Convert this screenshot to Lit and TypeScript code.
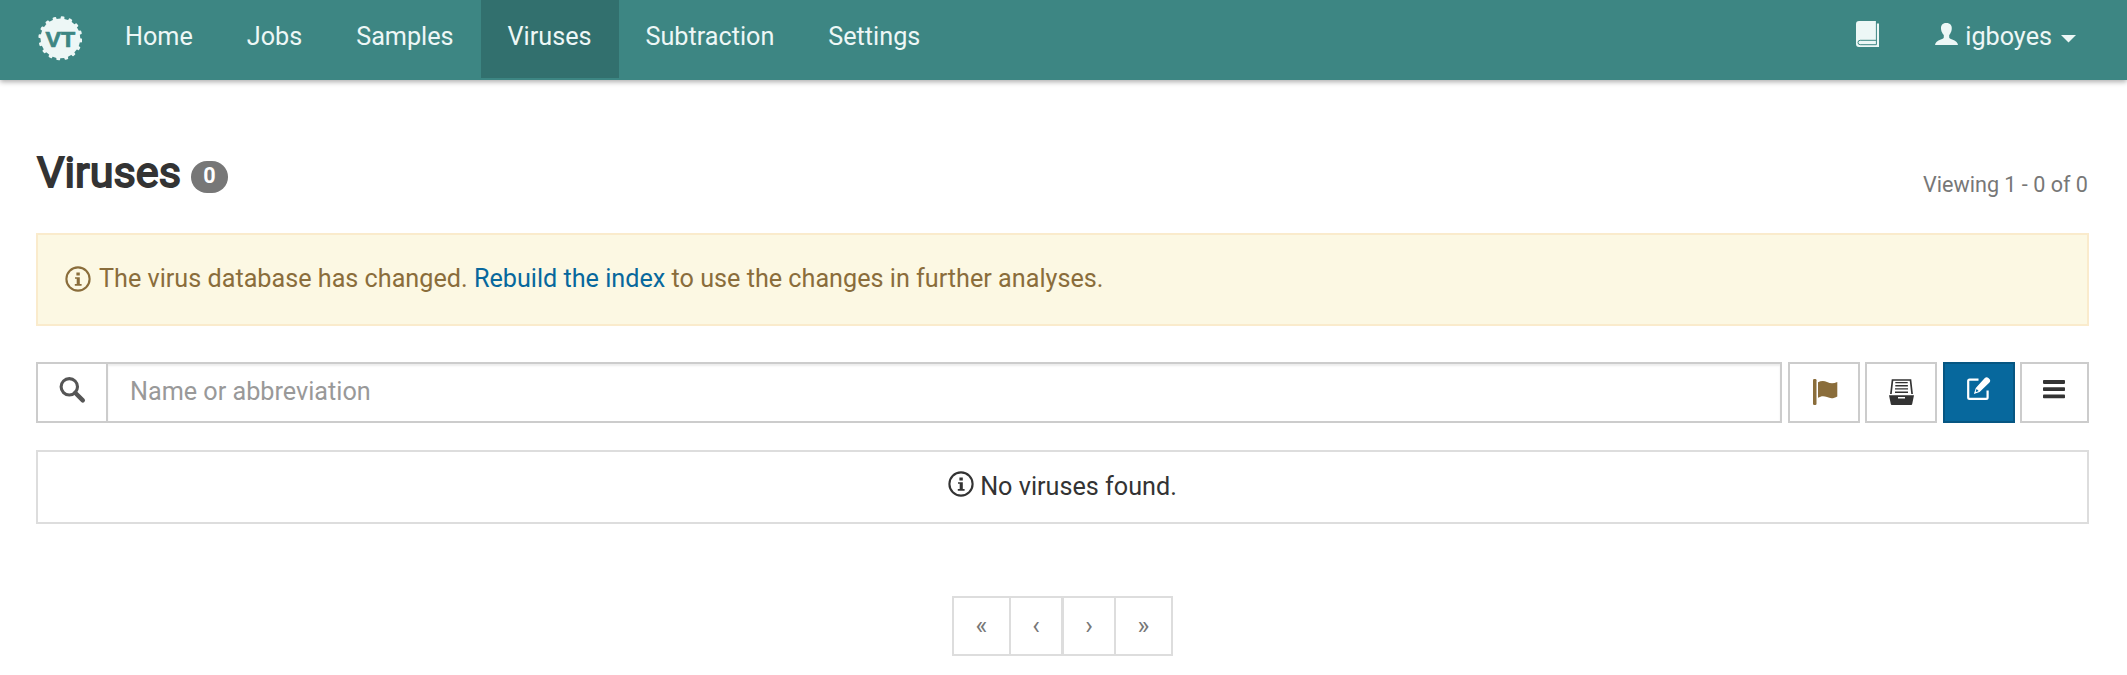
import { LitElement, html, svg, css } from "lit";
import { customElement } from "lit/decorators.js";

const TEETH = Array.from({ length: 16 }, (_, i) => i * 22.5 + 6);

const infoIcon = html`<svg class="info" width="26" height="26" viewBox="0 0 26 26" fill="none">
  <circle cx="13" cy="13" r="11.6" stroke="currentColor" stroke-width="2.1"/>
  <path fill="currentColor" d="M11.400 6.500h3.400v2.900h-3.400zM10 11.200h4.800v6.900h1.800v1.600H9.800v-1.600h1.900V12.800H10z"/>
</svg>`;

const flagIcon = html`<svg width="25" height="26" viewBox="0 0 25 26" fill="currentColor">
  <rect width="3.500" height="26" rx="1.200"/>
  <path d="M5 3.300C8 1.600 11 1.500 14 3c3.500 1.700 6.500 1.700 10.300 0v14.500c-3.800 2.200-6.800 2.200-10.300.6-3-1.400-6-1.300-9 .7z"/>
</svg>`;

const archiveIcon = html`<svg width="25" height="26" viewBox="0 0 25 26" fill="currentColor">
  <path d="M1.900 15L3.500 1h18l1.600 14" fill="none" stroke="currentColor" stroke-width="1.700"/>
  <path d="M6.300 3.100h12.400v1.200H6.300zM6.300 6.100h12.600v1.300H6.300zM6 9.200h13v1.400H6zM6 12.400h13v1.600H6z"/>
  <path fill-rule="evenodd" d="M0 16.200h25L23.200 25q-.2.9-1 .9H2.800q-.8 0-1-.9zM9 18v1.600h7V18z"/>
</svg>`;

const editIcon = html`<svg width="24" height="24" viewBox="0 0 24 24" fill="currentColor">
  <path d="M11.500 2.600H2.600q-1.400 0-1.400 1.400v16.400q0 1.400 1.400 1.400h16.600q1.400 0 1.400-1.400V13.500" fill="none" stroke="currentColor" stroke-width="2.200"/>
  <path d="M17.600 1.300q2-2 3.800-.2l1 1q1.700 1.800-.2 3.700L12.600 15l-5.700 1.900 1.900-6z"/>
  <path d="M9.600 12.100l2 2-2.300.800-.6-.7z" fill="#07689d"/>
</svg>`;

const menuIcon = html`<svg width="22" height="19" viewBox="0 0 22 19" fill="currentColor">
  <rect width="22" height="3.900" rx=".8"/><rect y="7.200" width="22" height="3.900" rx=".8"/><rect y="14.400" width="22" height="3.900" rx=".8"/>
</svg>`;

@customElement("app-root")
export class AppRoot extends LitElement {
  static styles = css`
    :host { display: block; height: 675px; background: #fff; color: #333; font: 25.2px/36px Roboto, sans-serif; overflow: hidden; }
    * { box-sizing: border-box; }
    svg { display: block; flex: none; }
    .navbar { display: flex; height: 80px; padding: 0 25px 2px 38px; background: #3d8683; color: #edf7f6; box-shadow: 0 2px 5px rgba(0,0,0,.32); }
    .logo { margin: 16px 16px 0 0; }
    .logo-text { font: bold 22px "Liberation Sans", sans-serif; fill: #3d8683; stroke: #3d8683; stroke-width: .7px; }
    .nav { display: flex; }
    .nav-link { padding: 19px 27px 0; height: 78px; }
    .nav-link.active { background: #32706e; }
    .right { margin-left: auto; display: flex; align-items: flex-start; }
    .book { margin: 21px 56px 0 0; }
    .user { display: flex; padding: 19px 26px 0 0; }
    .person { margin: 4px 7px 0 0; }
    .caret { margin: 16px 0 0 9px; }
    .container { padding: 0 38px 0 36px; }
    .header { display: flex; height: 153px; padding-top: 68px; }
    .title { margin: 0 0 0 1px; font-size: 43.2px; line-height: 50px; font-weight: 400; -webkit-text-stroke: 1.8px #333; }
    .badge { width: 37px; height: 32px; border-radius: 16px; background: #777; color: #fff; font-size: 21.6px; font-weight: 700; line-height: 30px; text-align: center; margin: 13px 0 0 10px; }
    .viewing { margin: 19px 1px 0 auto; font-size: 21.6px; color: #777; }
    .alert { display: flex; height: 93px; padding: 26px 27px 0; border: 2px solid #faebcc; background: #fcf8e3; color: #8a6d3b; white-space: pre; }
    .alert .info { margin: 5px 8px 0 0; }
    .link { color: #07689d; }
    .toolbar { display: flex; height: 61px; margin-top: 36px; }
    .addon { width: 70px; border: 2px solid #ccc; border-right: 0; padding: 13px 0 0 21px; color: #555; }
    .field { flex: 1; border: 2px solid #ccc; padding: 10px 22px; color: #999; box-shadow: inset 0 2px 2px rgba(0,0,0,.075); margin-right: 6px; }
    .btn { width: 72px; border: 2px solid #ccc; display: flex; justify-content: center; margin-right: 5px; padding-top: 15px; }
    .btn.flag { color: #8a6d3b; padding-left: 2px; }
    .btn.archive { margin-right: 6px; }
    .btn.primary { background: #07689d; border-color: #065682; color: #fff; padding-top: 13px; }
    .btn.menu { width: 69px; margin-right: 0; padding: 16px 1px 0 0; }
    .empty { display: flex; justify-content: center; height: 74px; margin-top: 27px; border: 2px solid #ddd; padding-top: 17px; }
    .empty .info { margin: 2px 6px 0 0; }
    .pager { display: grid; grid-template-columns: 55px 52px 53px 57px; width: 221px; height: 60px; margin: 72px auto 0; border: 2px solid #ddd; color: #777; }
    .page { text-align: center; padding-top: 10px; }
    .page + .page { border-left: 2px solid #ddd; }
    .page:nth-child(3) { border-left-width: 3px; }
  `;

  render() {
    return html`
      <nav class="navbar">
        <svg class="logo" width="44" height="45" viewBox="-22.400 -22.300 44 45">
          <circle r="19.900" fill="#edf7f6"/>
          ${TEETH.map(a => svg`<rect x="-1.900" y="-22" width="3.800" height="5" rx="1" fill="#edf7f6" transform="rotate(${a})"/>`)}
          <text class="logo-text" x="-14.800" y="8.200" textLength="29.600" lengthAdjust="spacingAndGlyphs">VT</text>
        </svg>
        <div class="nav">
          ${["Home", "Jobs", "Samples", "Viruses", "Subtraction", "Settings"].map(
            n => html`<a class=${n === "Viruses" ? "nav-link active" : "nav-link"}>${n}</a>`)}
        </div>
        <div class="right">
          <svg class="book" width="23" height="26" viewBox="0 0 23 26" fill="none">
            <path fill="currentColor" d="M3 0h17v2.500h3V26H3Q0 26 0 23V3Q0 0 3 0z"/>
            <path stroke="#3d8683" d="M20.400 0v23.700H4.200q-2.200 0-2.200-2.200t2.200-2.200H20.400"/>
          </svg>
          <div class="user">
            <svg class="person" width="23" height="22" viewBox="0 0 23 22" fill="currentColor">
              <path d="M11.300 0c4 0 6 2.400 5.400 6.500-.3 2.300-1.300 4.200-2.500 5.500v2.200c0 1 1 1.500 3 2.300 3.500 1.300 5.500 3 5.800 5.500H0c.3-2.500 2.300-4.200 5.800-5.500 2-.8 3-1.300 3-2.300V12C7.500 10.700 6.400 8.800 6.100 6.500 5.500 2.400 7.400 0 11.300 0z"/>
            </svg>
            <span>igboyes</span>
            <svg class="caret" width="15" height="8" viewBox="0 0 15 8"><path d="M0 0h15L7.500 7.500z" fill="currentColor"/></svg>
          </div>
        </div>
      </nav>
      <main class="container">
        <header class="header"><h3 class="title">Viruses</h3><span class="badge">0</span><span class="viewing">Viewing 1 - 0 of 0</span></header>
        <div class="alert">${infoIcon}<span>The virus database has changed. <a class="link">Rebuild the index</a> to use the changes in further analyses.</span></div>
        <div class="toolbar">
          <div class="addon"><svg width="27" height="27" viewBox="0 0 27 27" fill="none" stroke="currentColor"><circle cx="10.300" cy="9.800" r="8.200" stroke-width="3.100"/><path d="M16.200 15.800l7.600 7.600" stroke-width="4.400" stroke-linecap="round"/></svg></div>
          <div class="field">Name or abbreviation</div>
          <div class="btn flag">${flagIcon}</div>
          <div class="btn archive">${archiveIcon}</div>
          <div class="btn primary">${editIcon}</div>
          <div class="btn menu">${menuIcon}</div>
        </div>
        <div class="empty">${infoIcon}<span>No viruses found.</span></div>
        <div class="pager"><a class="page">«</a><a class="page">‹</a><a class="page">›</a><a class="page">»</a></div>
      </main>`;
  }
}
